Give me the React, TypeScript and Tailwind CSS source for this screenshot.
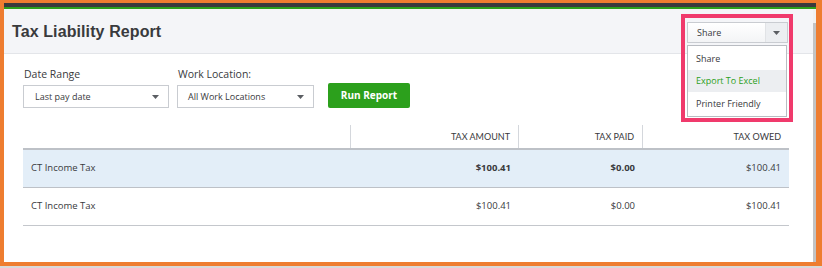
import React from "react";

const Caret = () => (
  <svg width="7" height="4" viewBox="0 0 7 4" className="block">
    <path d="M0 0 L7 0 L3.5 4 Z" fill="#5b5e63" />
  </svg>
);

export default function App() {
  const font = { fontFamily: '"Open Sans", "Liberation Sans", sans-serif' };
  const lato = { fontFamily: 'Lato, "Open Sans", sans-serif' };
  return (
    <div className="w-[822px] h-[268px] bg-[#d9d9d9] flex flex-col" style={font}>
      <div className="h-[266px] border-l-4 border-t-[3px] border-r-[6px] border-b-[4px] border-[#ee7d30] flex flex-col bg-white">
        <div className="h-[4px] bg-[#393a3d]" />
        <div className="h-[2px] bg-[#2ca01c]" />
        <div className="flex flex-1 min-h-0">
          <div className="flex-1 relative flex flex-col">
            {/* header */}
            <div className="h-[45px] bg-[#f4f5f8] border-b border-[#e3e5e9] flex items-center pl-[8px] pt-[1px]">
              <h1
                className="text-[16px] font-bold text-[#393a3d] tracking-[0.1px]"
                style={{ fontFamily: '"Liberation Sans", Arial, sans-serif' }}
              >
                Tax Liability Report
              </h1>
            </div>

            {/* share overlay */}
            <div className="absolute left-[677px] top-[5px] w-[112px] h-[108px] border-4 border-[#f03a6c] pl-[2px] pt-[4px]">
              <div className="w-[101px] h-[21px] border border-[#c9ccd1] flex bg-gradient-to-b from-white to-[#f3f4f6]">
                <div className="flex-1 flex items-center pl-[9px] text-[9px] text-[#393a3d]">Share</div>
                <div className="w-[22px] border-l border-[#e1e3e6] bg-[#eceef1] flex items-center justify-center">
                  <Caret />
                </div>
              </div>
              <div className="mt-[2px] w-[100px] h-[72px] border border-[#b9bcc2] bg-white flex flex-col text-[9px] text-[#393a3d]">
                <div className="h-[24px] flex items-center pl-[8px] pt-[1px]">Share</div>
                <div className="h-[22px] flex items-center pl-[8px] bg-[#eceef1] text-[#2ca01c]">Export To Excel</div>
                <div className="h-[24px] flex items-center pl-[8px]">Printer Friendly</div>
              </div>
            </div>

            {/* filters */}
            <div className="flex items-end pl-[19px] pt-[13px] gap-[8px]">
              <div className="flex flex-col">
                <div className="text-[10.5px] text-[#393a3d] h-[18px] pl-[1px]">Date Range</div>
                <div className="w-[146px] h-[23px] border border-[#c9ccd1] flex items-center justify-between pl-[11px] pr-[9px] text-[9px] text-[#393a3d]">
                  <span>Last pay date</span>
                  <Caret />
                </div>
              </div>
              <div className="flex flex-col ml-[0px]">
                <div className="text-[10.5px] text-[#393a3d] h-[18px] pl-[1px]">Work Location:</div>
                <div className="w-[137px] h-[23px] border border-[#c9ccd1] flex items-center justify-between pl-[10px] pr-[9px] text-[9px] text-[#393a3d]">
                  <span>All Work Locations</span>
                  <Caret />
                </div>
              </div>
              <button className="ml-[6px] mb-[0px] w-[82px] h-[25px] bg-[#2ca01c] rounded-[2px] text-white text-[10px] font-bold flex items-center justify-center">
                Run Report
              </button>
            </div>

            {/* table */}
            <div className="ml-[19px] mt-[17px] w-[766px] text-[9.5px] text-[#393a3d]">
              <div className="grid grid-cols-[328px_168px_124px_146px] h-[25px] border-b-2 border-[#bdc1c7]" style={lato}>
                <div className="border-r border-[#d4d7dc]" />
                <div className="border-r border-[#d4d7dc] flex items-center justify-end pr-[8px] text-[9px] uppercase">Tax Amount</div>
                <div className="border-r border-[#d4d7dc] flex items-center justify-end pr-[8px] text-[9px] uppercase">Tax Paid</div>
                <div className="flex items-center justify-end pr-[8px] text-[9px] uppercase">Tax Owed</div>
              </div>
              <div className="grid grid-cols-[328px_168px_124px_146px] h-[38px] bg-[#e3eef8] border-b border-[#bdc1c7]">
                <div className="flex items-center pl-[8px] font-medium">CT Income Tax</div>
                <div className="flex items-center justify-end pr-[8px] font-bold">$100.41</div>
                <div className="flex items-center justify-end pr-[8px] font-bold">$0.00</div>
                <div className="flex items-center justify-end pr-[8px]">$100.41</div>
              </div>
              <div className="grid grid-cols-[328px_168px_124px_146px] h-[38px] border-b border-[#c4c7cc]">
                <div className="flex items-center pl-[8px]">CT Income Tax</div>
                <div className="flex items-center justify-end pr-[8px]">$100.41</div>
                <div className="flex items-center justify-end pr-[8px]">$0.00</div>
                <div className="flex items-center justify-end pr-[8px]">$100.41</div>
              </div>
            </div>
          </div>
          {/* scrollbar */}
          <div className="w-[3px] flex flex-col bg-[#f1f1f1]">
            <div className="h-[14px]" />
            <div className="flex-1 bg-[#c3c3c3]" />
          </div>
        </div>
      </div>
    </div>
  );
}
